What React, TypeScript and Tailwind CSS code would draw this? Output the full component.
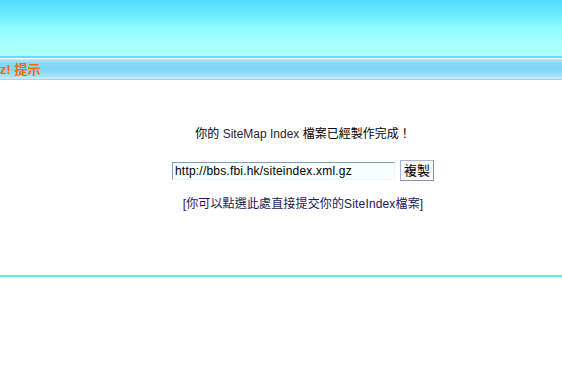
import React from "react";

export default function App() {
  const font = { fontFamily: '"Liberation Sans", "Noto Sans CJK TC", sans-serif' };
  return (
    <div className="w-[562px] h-[376px] overflow-hidden bg-white" style={font}>
      <div className="h-[56px] bg-[linear-gradient(to_bottom,#55d9fc_0%,#68ebff_25%,#92fdff_50%,#a6ffff_80%,#b0ffff_100%)]" />
      <div className="h-[2px] bg-[#5fe0f4]" />
      <div className="h-[1px] bg-white" />
      <div className="h-[20px] flex items-center bg-[linear-gradient(to_bottom,#b8ecfb_0%,#86d9f8_20%,#7ed6f8_55%,#a6e2fa_85%,#c8eefc_100%)]">
        <span className="text-[13px] font-bold text-[#ff6600] leading-none">z! 提示</span>
      </div>
      <div className="h-[1px] bg-[#c8c8cc]" />
      <div className="h-[195px] pl-[44px] flex flex-col items-center">
        <p className="mt-[47px] text-[12px] leading-[14px] text-black">
          你的 <span className="text-[#331a33]">SiteMap Index</span> 檔案已經製作完成！
        </p>
        <div className="mt-[19px] flex items-center gap-[5px]">
          <div className="w-[223px] h-[18px] border border-[#7f9db9] border-r-[#f0f4f8] border-b-[#f0f4f8] bg-[#f6ffff] flex items-center pl-[2px] text-[12px] tracking-[0.2px] text-black leading-none">
            http://bbs.fbi.hk/siteindex.xml.gz
          </div>
          <button className="w-[34px] h-[21px] border border-[#a8b4d8] border-r-[#8890b8] border-b-[#8890b8] bg-[#fafafa] text-[13px] text-black leading-none">
            複製
          </button>
        </div>
        <a className="mt-[16px] text-[12px] tracking-[0.15px] leading-[14px] text-[#1a1a55] cursor-pointer">
          [你可以點選此處直接提交你的SiteIndex檔案]
        </a>
      </div>
      <div className="h-[2px] bg-[#55eeff]" />
    </div>
  );
}
